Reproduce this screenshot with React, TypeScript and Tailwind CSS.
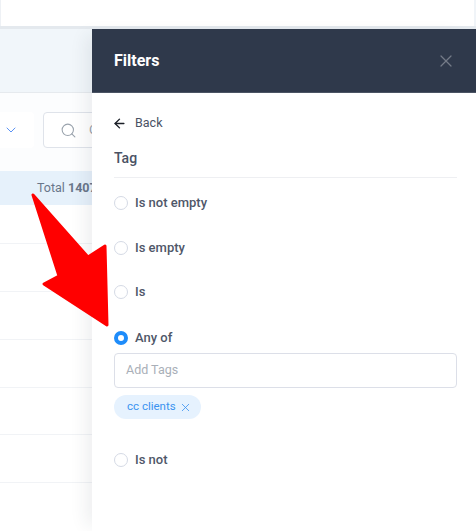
import { ArrowLeft, ChevronDown, Search, X } from "lucide-react";

function Radio({ label, checked }: { label: string; checked?: boolean }) {
  return (
    <div className="flex items-center h-5 gap-[7px]">
      {checked ? (
        <span className="w-[14px] h-[14px] rounded-full border-[4px] border-[#1e8cfa] bg-white" />
      ) : (
        <span className="w-[14px] h-[14px] rounded-full border border-[#d5dae5] bg-white" />
      )}
      <span className="text-[13px] font-medium text-[#4f5769]">{label}</span>
    </div>
  );
}

export default function App() {
  return (
    <div className="relative w-[476px] h-[531px] overflow-hidden bg-white font-['Roboto',sans-serif]">
      <div className="h-[26px] bg-white border-l border-[#eef1f5] border-r-2 border-r-[#f0f4f8]" />
      <div className="h-[3px] bg-[#e4e9ee]" />
      <div className="h-[64px] bg-[#f1f6fa] border-b border-[#e6eaee]" />
      <div className="h-[78px] bg-[#fcfdfe] flex items-center">
        <div className="w-[34px] h-[36px] bg-white rounded-r-[4px] flex items-center justify-end pr-[15px] mt-[-4px]">
          <ChevronDown size={16} strokeWidth={1.5} className="text-[#5b93f5]" />
        </div>
        <div className="ml-[9px] w-[60px] h-[36px] overflow-hidden whitespace-nowrap bg-white border border-[#dfe3ea] rounded-[4px] flex items-center pl-[16px] gap-[12px] mt-[-4px] text-[13px] text-[#9aa3ad]">
          <Search size={17} strokeWidth={1.5} className="text-[#9aa3ad] shrink-0" />
          C
        </div>
      </div>
      <div className="h-[34px] bg-[#e6f1fb] flex items-center pl-[37px] text-[12.5px] text-[#69768a] whitespace-nowrap">
        <span>
          Total <b className="font-bold">1407</b>
        </span>
      </div>
      {[39, 48, 48, 48, 47, 48].map((h, i) => (
        <div key={i} style={{ height: h }} className="border-b border-[#f1f3f6]" />
      ))}

      <div className="absolute left-[92px] top-[29px] right-0 bottom-0 bg-white shadow-[-12px_0_16px_-6px_rgba(40,50,70,0.08)]">
        <div className="h-[64px] bg-[#2f394b] border-b border-[#4b5464] flex items-center justify-between pl-[22px] pr-[20px] pt-[1px]">
          <span className="text-[16px] font-bold text-white">Filters</span>
          <X size={20} strokeWidth={1.5} className="text-[#747b88]" />
        </div>
        <div className="pl-[22px] pr-[19px]">
          <div className="flex items-center gap-[7px] mt-[20px] h-5">
            <ArrowLeft size={15} strokeWidth={2.25} className="text-[#1b1f27] ml-[-2px] mr-[1px]" />
            <span className="text-[12.5px] text-[#4a5264]">Back</span>
          </div>
          <div className="mt-[10px] pb-[9px] pt-[5px] text-[14px] leading-[20px] font-medium text-[#4a5264] border-b border-[#eeeff2]">
            Tag
          </div>
          <div className="flex flex-col gap-[24.5px] mt-[15px]">
            <Radio label="Is not empty" />
            <Radio label="Is empty" />
            <Radio label="Is" />
          </div>
          <div className="mt-[25.5px]">
            <Radio label="Any of" checked />
          </div>
          <div className="mt-[5.5px] h-[35px] border border-[#dcdfe8] rounded-[4px] flex items-center pl-[11px] text-[12.5px] text-[#a9afb8]">
            Add Tags
          </div>
          <div className="mt-[7px] w-[87px] h-[24px] rounded-full bg-[#e6f2fe] flex items-center pl-[13px] gap-[3px] text-[11.5px] text-[#3b93f0]">
            cc clients
            <X size={13} strokeWidth={1.5} />
          </div>
          <div className="mt-[31px]">
            <Radio label="Is not" />
          </div>
        </div>
      </div>

      <svg className="absolute left-0 top-0" width="476" height="531" viewBox="0 0 476 531">
        <path
          d="M33 195 L88 257 L105 246 L107 325 L44 284 L59 276 Z"
          fill="#ff0000"
          stroke="#ff0000"
          strokeWidth="3"
          strokeLinejoin="round"
        />
      </svg>
    </div>
  );
}
